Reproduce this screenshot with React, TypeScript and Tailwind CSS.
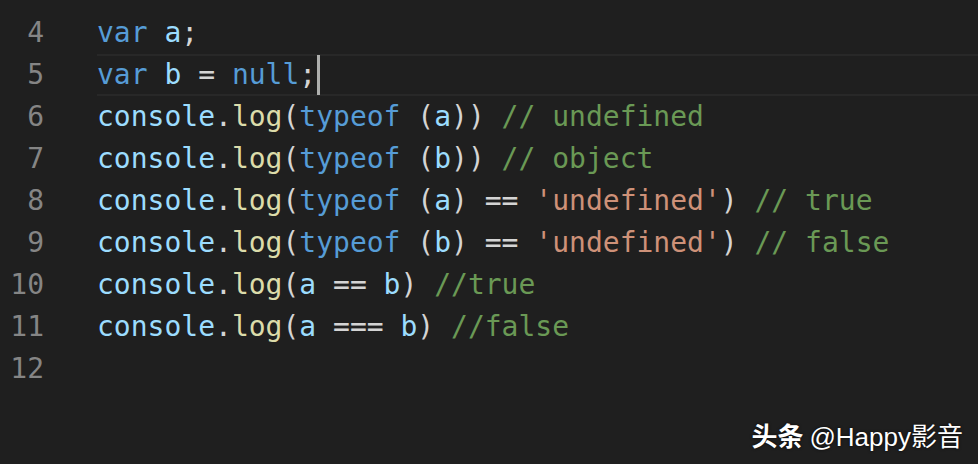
type Tok = [string, string];

const C = {
  kw: 'text-[#569cd6]',
  v: 'text-[#9cdcfe]',
  fn: 'text-[#dcdcaa]',
  p: 'text-[#d4d4d4]',
  s: 'text-[#ce9178]',
  c: 'text-[#6a9955]',
};

const lines: { n: number; toks: Tok[]; active?: boolean }[] = [
  { n: 3, toks: [] },
  { n: 4, toks: [['var', C.kw], [' ', C.p], ['a', C.v], [';', C.p]] },
  { n: 5, active: true, toks: [['var', C.kw], [' ', C.p], ['b', C.v], [' = ', C.p], ['null', C.kw], [';', C.p]] },
  { n: 6, toks: [['console', C.v], ['.', C.p], ['log', C.fn], ['(', C.p], ['typeof', C.kw], [' (', C.p], ['a', C.v], ['))', C.p], [' // undefined', C.c]] },
  { n: 7, toks: [['console', C.v], ['.', C.p], ['log', C.fn], ['(', C.p], ['typeof', C.kw], [' (', C.p], ['b', C.v], ['))', C.p], [' // object', C.c]] },
  { n: 8, toks: [['console', C.v], ['.', C.p], ['log', C.fn], ['(', C.p], ['typeof', C.kw], [' (', C.p], ['a', C.v], [') == ', C.p], ["'undefined'", C.s], [')', C.p], [' // true', C.c]] },
  { n: 9, toks: [['console', C.v], ['.', C.p], ['log', C.fn], ['(', C.p], ['typeof', C.kw], [' (', C.p], ['b', C.v], [') == ', C.p], ["'undefined'", C.s], [')', C.p], [' // false', C.c]] },
  { n: 10, toks: [['console', C.v], ['.', C.p], ['log', C.fn], ['(', C.p], ['a', C.v], [' == ', C.p], ['b', C.v], [')', C.p], [' //true', C.c]] },
  { n: 11, toks: [['console', C.v], ['.', C.p], ['log', C.fn], ['(', C.p], ['a', C.v], [' === ', C.p], ['b', C.v], [')', C.p], [' //false', C.c]] },
  { n: 12, toks: [] },
];

export default function App() {
  return (
    <div className="relative w-[978px] h-[464px] overflow-hidden bg-[#1f1f1f] font-['DejaVu_Sans_Mono',monospace] text-[28px] leading-[42px]">
      <div className="-mt-[30px]">
        {lines.map((l) => (
          <div key={l.n} className="flex h-[42px]">
            <div className="w-[44px] shrink-0 text-right text-[#858585]">{l.n}</div>
            <div
              className={
                l.active
                  ? 'ml-[53px] flex-1 flex items-center whitespace-pre border-y-2 border-[#282828]'
                  : 'ml-[53px] flex-1 flex items-center whitespace-pre'
              }
            >
              {l.toks.map(([t, cls], i) => (
                <span key={i} className={cls}>{t}</span>
              ))}
              {l.active && <span className="ml-[1px] inline-block w-[3px] h-[40px] bg-[#aeafad]" />}
            </div>
          </div>
        ))}
      </div>
      <div className="absolute right-[15px] bottom-[14px] flex items-baseline gap-[6px] text-white text-[26px] leading-none font-['Liberation_Sans','Noto_Sans_CJK_SC',sans-serif] [text-shadow:0_0_3px_rgba(0,0,0,0.8)]">
        <span className="font-bold font-['Noto_Sans_CJK_SC',sans-serif]">头条</span>
        <span>@Happy影音</span>
      </div>
    </div>
  );
}
